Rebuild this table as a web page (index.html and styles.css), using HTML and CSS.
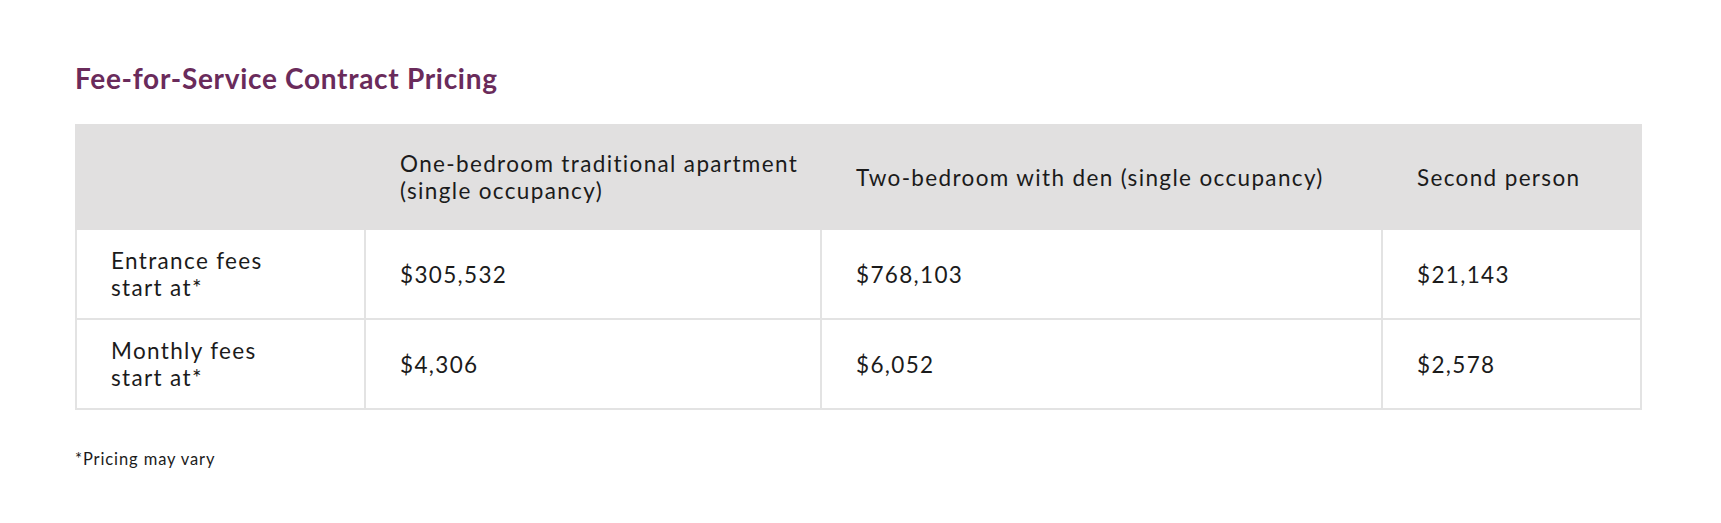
FILE: index.html
```html
<!DOCTYPE html>
<html lang="en">
<head>
<meta charset="utf-8">
<title>Fee-for-Service Contract Pricing</title>
<link rel="stylesheet" href="styles.css">
</head>
<body>
<main class="page">
  <h2 class="title">Fee-for-Service Contract Pricing</h2>
  <table class="pricing">
    <colgroup>
      <col class="c1"><col class="c2"><col class="c3"><col class="c4">
    </colgroup>
    <thead>
      <tr>
        <th></th>
        <th>One-bedroom traditional apartment<br>(single occupancy)</th>
        <th>Two-bedroom with den (single occupancy)</th>
        <th>Second person</th>
      </tr>
    </thead>
    <tbody>
      <tr>
        <td>Entrance fees<br>start at*</td>
        <td>$305,532</td>
        <td>$768,103</td>
        <td>$21,143</td>
      </tr>
      <tr>
        <td>Monthly fees<br>start at*</td>
        <td>$4,306</td>
        <td>$6,052</td>
        <td>$2,578</td>
      </tr>
    </tbody>
  </table>
  <p class="note">*Pricing may vary</p>
</main>
</body>
</html>
```
FILE: styles.css
```css
html, body {
  margin: 0;
  padding: 0;
  background: #ffffff;
}
body {
  font-family: "Lato", "Open Sans", sans-serif;
  color: #1b1b1b;
}
.page {
  padding: 60px 0 0 75px;
}
.title {
  margin: 0;
  font-size: 28px;
  line-height: 36px;
  font-weight: 700;
  letter-spacing: 0.7px;
  color: #6a2b5b;
}
.pricing {
  margin-top: 28px;
  border-collapse: collapse;
  width: 1565px;
  table-layout: fixed;
  font-size: 22.5px;
  line-height: 27px;
  letter-spacing: 1.35px;
}
.c1 { width: 289px; }
.c2 { width: 456px; }
.c3 { width: 561px; }
.c4 { width: 259px; }
.pricing th,
.pricing td {
  border: 2px solid #e3e3e3;
  padding: 0 8px 0 34px;
  text-align: left;
  vertical-align: middle;
  font-weight: 400;
}
.pricing th {
  background: #e1e0e0;
  height: 102px;
  border-color: #e1e0e0;
}
.pricing td {
  height: 88px;
}
.note {
  margin: 39px 0 0;
  font-size: 16.5px;
  line-height: 20px;
  letter-spacing: 0.9px;
}
```
